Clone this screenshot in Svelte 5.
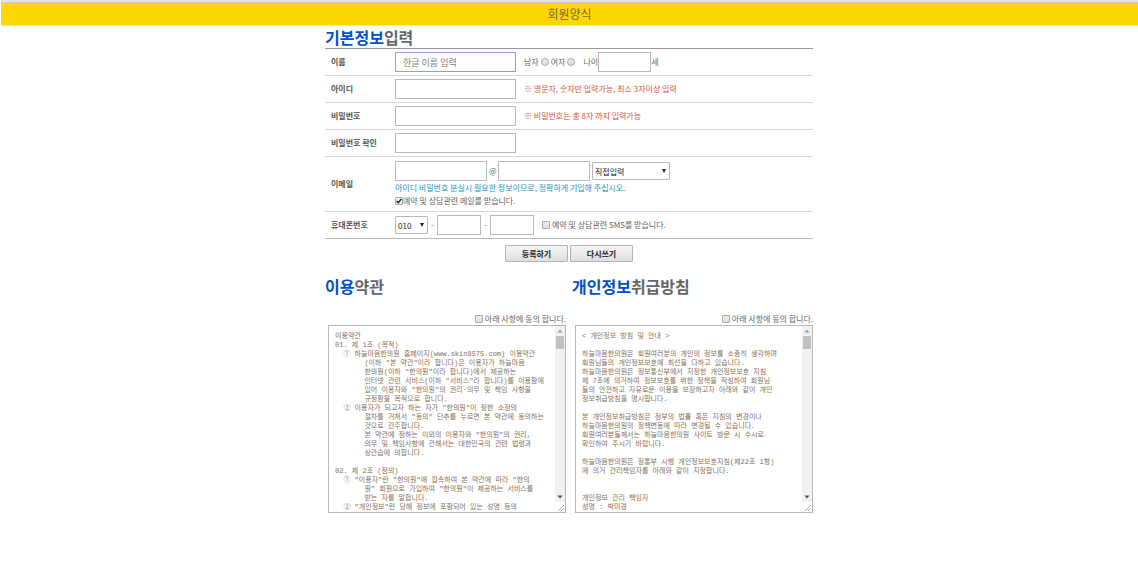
<script>
  const terms = [
    '이용약관',
    '01. 제 1조 (목적)',
    '  ① 하늘마음한의원 홈페이지(www.skin8575.com) 이용약관',
    '       (이하 "본 약관"이라 합니다)은 이용자가 하늘마음',
    '       한의원(이하 "한의원"이라 합니다)에서 제공하는',
    '       인터넷 관련 서비스(이하 "서비스"라 합니다)를 이용함에',
    '       있어 이용자와 "한의원"의 권리·의무 및 책임 사항을',
    '       규정함을 목적으로 합니다.',
    '  ② 이용자가 되고자 하는 자가 "한의원"이 정한 소정의',
    '       절차를 거쳐서 "동의" 단추를 누르면 본 약관에 동의하는',
    '       것으로 간주합니다.',
    '       본 약관에 정하는 이외의 이용자와 "한의원"의 권리,',
    '       의무 및 책임사항에 관해서는 대한민국의 관련 법령과',
    '       상관습에 의합니다.',
    '',
    '02. 제 2조 (정의)',
    '  ① "이용자"란 "한의원"에 접속하여 본 약관에 따라 "한의',
    '       원" 회원으로 가입하여 "한의원"이 제공하는 서비스를',
    '       받는 자를 말합니다.',
    '  ② "개인정보"란 당해 정보에 포함되어 있는 성명 등의'
  ].join('\n');

  const privacy = [
    '< 개인정보 방침 및 안내 >',
    '',
    '하늘마음한의원은 회원여러분의 개인의 정보를 소중히 생각하며',
    '회원님들의 개인정보보호에 최선을 다하고 있습니다.',
    '하늘마음한의원은 정보통신부에서 지정한 개인정보보호 지침',
    '제 7조에 의거하여 정보보호를 위한 정책을 작성하여 회원님',
    '들의 안전하고 자유로운 이용을 보장하고자 아래와 같이 개인',
    '정보취급방침을 명시합니다.',
    '',
    '본 개인정보취급방침은 정부의 법률 혹은 지침의 변경이나',
    '하늘마음한의원의 정책변동에 따라 변경될 수 있습니다.',
    '회원여러분들께서는 하늘마음한의원 사이트 방문 시 수시로',
    '확인하여 주시기 바랍니다.',
    '',
    '하늘마음한의원은 정통부 시행 개인정보보호지침(제22조 1항)',
    '에 의거 관리책임자를 아래와 같이 지정합니다.',
    '',
    '',
    '개인정보 관리 책임자',
    '성명 : 박미경'
  ].join('\n');

  const agreements = [
    { id: 'terms', lead: '이용', rest: '약관', text: terms },
    { id: 'privacy', lead: '개인정보', rest: '취급방침', text: privacy }
  ];
</script>

<header><h1>회원양식</h1></header>

<main>
  <form onsubmit={(e) => e.preventDefault()}>
    <h2><b>기본정보</b>입력</h2>
    <div class="fields">
      <div class="row">
        <label class="name" for="name">이름</label>
        <div class="line">
          <input class="text wide focus" id="name" type="text" placeholder="한글 이름 입력" />
          <div class="group gender">
            <label>남자 <input type="radio" name="gender" /></label>
            <label>여자 <input type="radio" name="gender" /></label>
          </div>
          <label class="age">나이<input class="text short" type="text" />세</label>
        </div>
      </div>
      <div class="row">
        <label class="name" for="userid">아이디</label>
        <div class="line">
          <input class="text wide" id="userid" type="text" />
          <span class="note">※ 영문자, 숫자만 입력가능, 최소 3자이상 입력</span>
        </div>
      </div>
      <div class="row">
        <label class="name" for="pw">비밀번호</label>
        <div class="line">
          <input class="text wide" id="pw" type="password" />
          <span class="note">※ 비밀번호는 총 8자 까지 입력가능</span>
        </div>
      </div>
      <div class="row">
        <label class="name" for="pw2">비밀번호 확인</label>
        <div class="line"><input class="text wide" id="pw2" type="password" /></div>
      </div>
      <div class="row">
        <label class="name" for="mail">이메일</label>
        <div class="stack">
          <div class="line tight">
            <input class="text mail" id="mail" type="text" />
            <span class="at">@</span>
            <input class="text mail" type="text" aria-label="이메일 도메인" />
            <span class="select domain">
              <select aria-label="도메인 선택"><option>직접입력</option></select>
            </span>
          </div>
          <p class="hint">아이디 비밀번호 분실시 필요한 정보이므로, 정확하게 기입해 주십시오.</p>
          <label class="check"><input type="checkbox" checked />예약 및 상담관련 메일를 받습니다.</label>
        </div>
      </div>
      <div class="row">
        <label class="name" for="phone">휴대폰번호</label>
        <div class="line tight">
          <span class="select code">
            <select id="phone"><option>010</option></select>
          </span>
          <span class="dash">-</span>
          <input class="text part" type="text" aria-label="휴대폰번호 가운데 자리" />
          <span class="dash">-</span>
          <input class="text part" type="text" aria-label="휴대폰번호 끝자리" />
          <label class="check sms"><input type="checkbox" />예약 및 상담관련 SMS를 받습니다.</label>
        </div>
      </div>
    </div>
    <div class="buttons">
      <button type="submit">등록하기</button>
      <button type="reset">다시쓰기</button>
    </div>
  </form>

  <div class="agreements">
    {#each agreements as item (item.id)}
      <section>
        <h2><b>{item.lead}</b>{item.rest}</h2>
        <label class="check agree"><input type="checkbox" />아래 사항에 동의 합니다.</label>
        <div class="box">
          <textarea readonly wrap="off" aria-label={item.lead + item.rest} value={item.text}></textarea>
          <div class="bar" aria-hidden="true">
            <svg width="10" height="10" viewBox="0 0 10 10"><path d="M5 3.5 7.5 6.5h-5z" fill="#9a9a9a" /></svg>
            <span class="thumb"></span>
            <svg width="10" height="10" viewBox="0 0 10 10"><path d="M5 6.5 7.5 3.5h-5z" fill="#505050" /></svg>
            <svg class="grip" width="10" height="10" viewBox="0 0 10 10"><path d="M3 9 9 3M6 9 9 6" stroke="#aaa" fill="none" /></svg>
          </div>
        </div>
      </section>
    {/each}
  </div>
</main>

<style>
  :global(body) {
    margin: 0;
    background: #fff;
    color: #666;
    font-family: 'Noto Sans CJK KR', sans-serif;
    font-size: 8px;
    line-height: 12px;
  }

  header {
    margin-left: 1px;
    border-top: 2px solid #e2e2e8;
    border-bottom: 1px solid #ffeb80;
    background: #ffd700;
    box-shadow: inset 0 1px #cfcabc;
  }

  h1 {
    margin: 0;
    color: #74693a;
    font-size: 12px;
    font-weight: 400;
    line-height: 23px;
    text-align: center;
  }

  main {
    max-width: 488px;
    margin: 0 auto;
  }

  h2 {
    margin: 0;
    color: #666;
    font-size: 16px;
    font-weight: 700;
    line-height: 22px;
  }

  h2 b {
    color: #0050c8;
    font-weight: 700;
  }

  .fields {
    border-top: 1px solid #999;
    border-bottom: 1px solid #bbb;
  }

  .row {
    display: grid;
    grid-template-columns: 64px 1fr;
    align-items: center;
    padding: 3px 0 3px 6px;
  }

  .row + .row {
    border-top: 1px solid #d8d8d8;
  }

  .name {
    color: #555;
    font-weight: 700;
  }

  .line,
  .group,
  .age,
  .check,
  .gender label {
    display: flex;
    align-items: center;
  }

  .line {
    gap: 8px;
  }

  .tight {
    gap: 2px;
  }

  .group,
  .gender label {
    gap: 2px;
  }

  input,
  select,
  button,
  textarea {
    box-sizing: border-box;
    margin: 0;
    font-family: inherit;
    font-size: 8px;
  }

  .text {
    height: 20px;
    padding: 0 7px;
    border: 1px solid #b8b8b8;
    background: #fff;
    color: #444;
  }

  .text::placeholder {
    color: #808080;
    font-size: 9px;
    opacity: 1;
  }

  .focus {
    border-color: #7ea6e4;
  }

  .wide {
    width: 121px;
  }

  .mail {
    width: 92px;
  }

  .short {
    width: 53px;
  }

  .part {
    width: 44px;
  }

  .note {
    color: #e0523c;
  }

  .hint {
    margin: 0;
    color: #1797c4;
  }

  .stack {
    display: grid;
    gap: 1px;
    padding: 1px 0;
  }

  .at {
    width: 7px;
    text-align: center;
  }

  .dash {
    width: 5px;
    text-align: center;
  }

  input[type='radio'],
  input[type='checkbox'] {
    appearance: none;
    width: 8px;
    height: 8px;
    border: 1px solid #aaa;
    border-radius: 1px;
    background: linear-gradient(#eee, #ddd);
  }

  input[type='radio'] {
    border-radius: 50%;
  }

  input[type='checkbox']:checked {
    background: #eee
      url("data:image/svg+xml,%3Csvg xmlns='http://www.w3.org/2000/svg' viewBox='0 0 6 6'%3E%3Cpath d='M.6 3 2.3 4.8 5.4.9' fill='none' stroke='%23222' stroke-width='1.4'/%3E%3C/svg%3E")
      center / 6px 6px no-repeat;
  }

  .sms,
  .agree {
    gap: 2px;
  }

  .sms {
    margin-left: 6px;
  }

  .select {
    position: relative;
  }

  .select::after {
    content: '';
    position: absolute;
    top: 7px;
    right: 4px;
    border: solid transparent;
    border-width: 4px 2px 0;
    border-top-color: #222;
    pointer-events: none;
  }

  select {
    display: block;
    width: 100%;
    height: 18px;
    padding: 0 2px;
    appearance: none;
    border: 1px solid #b8b8b8;
    border-radius: 1px;
    background: #fff;
    color: #222;
  }

  .domain {
    width: 78px;
  }

  .code {
    width: 33px;
  }

  .buttons {
    display: flex;
    justify-content: center;
    gap: 2px;
    padding-top: 6px;
  }

  button {
    width: 63px;
    height: 17px;
    padding: 0;
    border: 1px solid #b4b4b4;
    border-radius: 1px;
    background: linear-gradient(#f6f6f6, #dedede);
    color: #222;
    font-weight: 700;
    line-height: 15px;
  }

  .agreements {
    display: grid;
    grid-template-columns: 1fr 1fr;
    gap: 6px;
    padding-top: 13px;
  }

  .agree {
    justify-content: flex-end;
    margin-top: 16px;
  }

  .box {
    display: flex;
    height: 186px;
    margin-left: 3px;
    border: 1px solid #b8b8b8;
  }

  textarea {
    flex: 1;
    min-width: 0;
    padding: 6px 6px 0;
    border: 0;
    outline: 0;
    resize: none;
    overflow: hidden;
    background: #fff;
    color: #86705a;
    font-family: 'Liberation Mono', 'Noto Sans CJK KR', monospace;
    font-size: 7px;
    line-height: 9px;
    white-space: pre;
  }

  .bar {
    display: flex;
    flex-direction: column;
    width: 10px;
    background: #f1f1f1;
  }

  .bar svg {
    display: block;
  }

  .thumb {
    height: 13px;
    margin: 0 1px auto;
    background: #c1c1c1;
  }

  .grip {
    background: #fff;
  }
</style>
